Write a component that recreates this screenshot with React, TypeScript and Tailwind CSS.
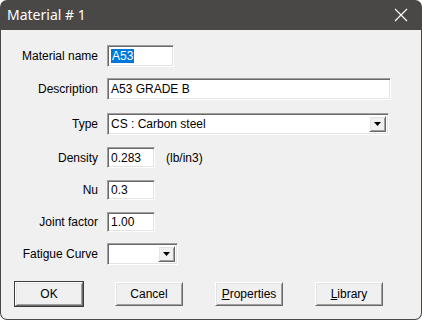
import React from "react";

const sunken =
  "border border-t-[#a0a0a0] border-l-[#a0a0a0] border-b-white border-r-white shadow-[inset_1px_1px_0_#696969,inset_-1px_-1px_0_#e3e3e3] bg-white";
const raised =
  "border border-t-white border-l-white border-b-[#696969] border-r-[#696969] shadow-[inset_1px_1px_0_#e3e3e3,inset_-1px_-1px_0_#a0a0a0] bg-[#f0f0f0]";

function Label({ children }: { children: React.ReactNode }) {
  return (
    <div className="w-[98px] shrink-0 text-right pr-[1px] text-[12px] text-black leading-none">
      {children}
    </div>
  );
}

function DropBtn() {
  return (
    <div className={`${raised} w-[17px] h-full flex items-center justify-center`}>
      <svg width="7" height="4" viewBox="0 0 7 4">
        <polygon points="0,0 7,0 3.5,4" fill="#000" />
      </svg>
    </div>
  );
}

function Btn({ children, def }: { children: React.ReactNode; def?: boolean }) {
  return (
    <div
      className={`w-[68px] h-[24px] ${
        def ? "outline outline-1 outline-[#3c3c3c]" : ""
      } ${raised} flex items-center justify-center text-[12px] text-black`}
    >
      {children}
    </div>
  );
}

export default function App() {
  return (
    <div
      className="w-[422px] h-[320px] bg-white"
      style={{ fontFamily: '"Liberation Sans", Arial, sans-serif' }}
    >
      <div className="w-full h-full rounded-[7px] overflow-hidden bg-[#4a4846] flex flex-col">
        <div className="h-[30px] shrink-0 flex items-center justify-between pl-[7px] pr-[12px]">
          <span
            className="text-white text-[14px] leading-none"
            style={{ fontFamily: '"Noto Sans", "Open Sans", sans-serif' }}
          >
            Material # 1
          </span>
          <svg width="14" height="14" viewBox="0 0 14 14" className="mr-[2px]">
            <path d="M1 1 L13 13 M13 1 L1 13" stroke="#ffffff" strokeWidth="1.2" />
          </svg>
        </div>
        <div className="flex-1 mx-[1px] mb-[1px] rounded-b-[6px] bg-[#f0f0f0] flex flex-col pt-[15px]">
          <div className="flex items-center gap-[8px] h-[22px]">
            <Label>Material name</Label>
            <div className={`${sunken} w-[67px] h-[22px] flex items-center pl-[3px]`}>
              <span className="bg-[#0078d7] text-white text-[12px] leading-[14px] px-[1px]">A53</span>
            </div>
          </div>
          <div className="flex items-center gap-[8px] h-[22px] mt-[11px]">
            <Label>Description</Label>
            <div className={`${sunken} w-[284px] h-[22px] flex items-center pl-[3px] text-[12px]`}>
              A53 GRADE B
            </div>
          </div>
          <div className="flex items-center gap-[8px] h-[22px] mt-[13px]">
            <Label>Type</Label>
            <div className={`${sunken} w-[282px] h-[22px] flex items-center text-[12px] p-[2px] pl-[3px]`}>
              <span className="flex-1">CS : Carbon steel</span>
              <DropBtn />
            </div>
          </div>
          <div className="flex items-center gap-[8px] h-[21px] mt-[12px]">
            <Label>Density</Label>
            <div className={`${sunken} w-[48px] h-[21px] flex items-center pl-[3px] text-[12px]`}>
              0.283
            </div>
            <span className="text-[12px] ml-[3px]">(lb/in3)</span>
          </div>
          <div className="flex items-center gap-[8px] h-[20px] mt-[12px]">
            <Label>Nu</Label>
            <div className={`${sunken} w-[48px] h-[20px] flex items-center pl-[3px] text-[12px]`}>
              0.3
            </div>
          </div>
          <div className="flex items-center gap-[8px] h-[20px] mt-[12px]">
            <Label>Joint factor</Label>
            <div className={`${sunken} w-[48px] h-[20px] flex items-center pl-[3px] text-[12px]`}>
              1.00
            </div>
          </div>
          <div className="flex items-center gap-[8px] h-[22px] mt-[11px]">
            <Label>Fatigue Curve</Label>
            <div className={`${sunken} w-[71px] h-[22px] flex items-center p-[2px]`}>
              <span className="flex-1" />
              <DropBtn />
            </div>
          </div>
          <div className="flex gap-[32px] pl-[14px] mt-[17px]">
            <Btn def>OK</Btn>
            <Btn>Cancel</Btn>
            <Btn>
              <span>
                <span className="underline">P</span>roperties
              </span>
            </Btn>
            <Btn>
              <span>
                <span className="underline">L</span>ibrary
              </span>
            </Btn>
          </div>
        </div>
      </div>
    </div>
  );
}
